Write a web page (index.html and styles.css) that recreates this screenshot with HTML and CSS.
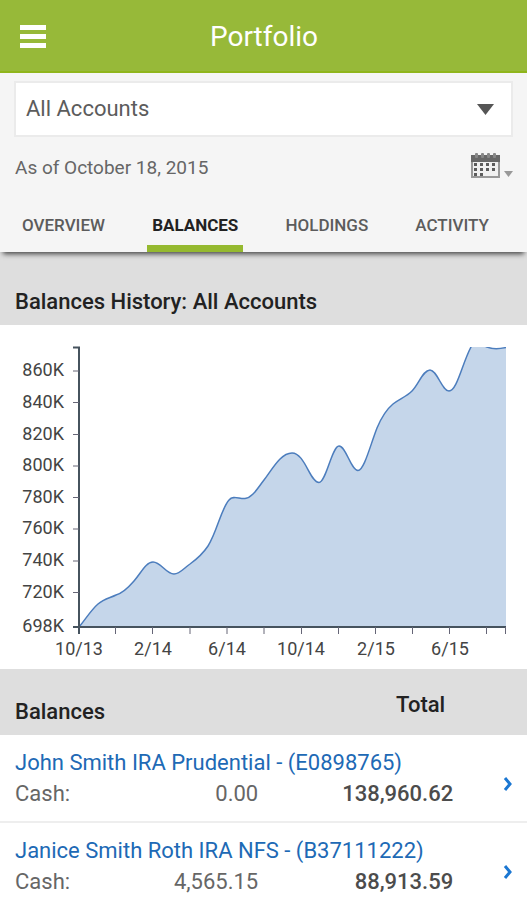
FILE: index.html
```html
<!DOCTYPE html>
<html lang="en">
<head>
<meta charset="utf-8">
<meta name="viewport" content="width=device-width, initial-scale=1">
<title>Portfolio</title>
<link rel="stylesheet" href="styles.css">
</head>
<body>
<header class="app-bar">
  <button class="menu-button" type="button" aria-label="Menu">
    <svg width="26" height="23" viewBox="0 0 26 23" fill="#fff" aria-hidden="true"><path d="M0 0h26v5H0zM0 9h26v5H0zM0 18h26v5H0z"/></svg>
  </button>
  <h1 class="app-title">Portfolio</h1>
</header>

<section class="filters">
  <div class="account-picker">
    <select class="account-select" aria-label="Account">
      <option>All Accounts</option>
    </select>
    <svg class="account-arrow" width="17" height="11" viewBox="0 0 17 11" fill="#555" aria-hidden="true"><path d="M0 0h17l-8.500 11z"/></svg>
  </div>
  <div class="date-row">
    <p class="as-of">As of October 18, 2015</p>
    <button class="date-button" type="button" aria-label="Choose date">
      <svg width="43" height="28" viewBox="0 0 43 28" aria-hidden="true">
        <path fill="#f1f1f1" stroke="#999" stroke-width="2" d="M2 4h27v20H2z"/>
        <path fill="#686868" d="M1 2h29v7H1z"/>
        <g fill="#888"><rect x="5" y="0" width="3" height="5" rx="1"/><rect x="11" y="0" width="3" height="5" rx="1"/><rect x="17" y="0" width="3" height="5" rx="1"/><rect x="23" y="0" width="3" height="5" rx="1"/></g>
        <path fill="#5c5c5c" d="M4 10h3v3H4zM10 10h3v3h-3zM16 10h3v3h-3zM22 10h3v3h-3zM4 15h3v3H4zM10 15h3v3h-3zM16 15h3v3h-3zM22 15h3v3h-3zM4 20h3v3H4zM10 20h3v3h-3z"/>
        <path fill="#999" d="M34 18h9l-4.500 6z"/>
      </svg>
    </button>
  </div>
  <nav class="tabs">
    <a class="tab" href="#overview">OVERVIEW</a>
    <a class="tab tab-active" href="#balances" aria-current="page">BALANCES</a>
    <a class="tab" href="#holdings">HOLDINGS</a>
    <a class="tab" href="#activity">ACTIVITY</a>
  </nav>
</section>

<main>
  <h2 class="section-title">Balances History: All Accounts</h2>
  <svg class="chart" viewBox="0 325 527 344" role="img" aria-label="Balance history, all accounts">
    <defs><clipPath id="plot"><path d="M79 347h427v281H79z"/></clipPath></defs>
    <g clip-path="url(#plot)">
      <path class="chart-area" d="M79 627C85 620 91 610 98 604C104 599 110 598 116 595C123 593 128 588 134 581C141 573 146 562 153 562C161 562 166 574 174 574C180 574 184 568 190 564C197 559 202 555 208 546C217 532 221 509 229 500C233 495 239 499 245 498.500C252 498 257 489 264 480C273 468 281 453 292 453C305 453 310 482.500 319 482.500C326 482.500 332 446 339 446C346 446 351 470.500 358 470.500C364 470.500 370 446 377 428C382 416 387 409 393 404C399 399 406 397 412 391C419 384 423 370 430 370C437 370 442 391 449 391C457 391 462 364 471 347C475 340 482 345 487 347C493 349.500 499 349 506 347.500V627.500H79Z"/>
      <path class="chart-line" d="M79 627C85 620 91 610 98 604C104 599 110 598 116 595C123 593 128 588 134 581C141 573 146 562 153 562C161 562 166 574 174 574C180 574 184 568 190 564C197 559 202 555 208 546C217 532 221 509 229 500C233 495 239 499 245 498.500C252 498 257 489 264 480C273 468 281 453 292 453C305 453 310 482.500 319 482.500C326 482.500 332 446 339 446C346 446 351 470.500 358 470.500C364 470.500 370 446 377 428C382 416 387 409 393 404C399 399 406 397 412 391C419 384 423 370 430 370C437 370 442 391 449 391C457 391 462 364 471 347C475 340 482 345 487 347C493 349.500 499 349 506 347.500"/>
    </g>
    <path class="chart-axis" d="M73 347.500h6V634M73 627h433"/>
    <path class="chart-ticks" d="M73 371h6M73 402.500h6M73 434.500h6M73 466h6M73 497.500h6M73 529h6M73 561h6M73 592.500h6M115.500 627v7M152.500 627v7M190 627v7M227 627v7M264 627v7M301.500 627v7M338.500 627v7M375.500 627v7M412.500 627v7M449.500 627v7M486.500 627v7M505.500 627v7"/>
    <g class="chart-label chart-label-y">
      <text x="64" y="376">860K</text>
      <text x="64" y="408">840K</text>
      <text x="64" y="440">820K</text>
      <text x="64" y="471">800K</text>
      <text x="64" y="503">780K</text>
      <text x="64" y="534">760K</text>
      <text x="64" y="566">740K</text>
      <text x="64" y="598">720K</text>
      <text x="64" y="632">698K</text>
    </g>
    <g class="chart-label chart-label-x">
      <text x="79" y="655">10/13</text>
      <text x="153" y="655">2/14</text>
      <text x="227" y="655">6/14</text>
      <text x="301" y="655">10/14</text>
      <text x="376" y="655">2/15</text>
      <text x="450" y="655">6/15</text>
    </g>
  </svg>

  <table class="balances">
    <colgroup><col class="col-label"><col class="col-cash"><col class="col-total"><col class="col-open"></colgroup>
    <thead>
      <tr>
        <th class="head-balances" colspan="2" scope="col">Balances</th>
        <th class="head-total" scope="col">Total</th>
        <td></td>
      </tr>
    </thead>
    <tbody class="account">
      <tr>
        <th class="account-name" colspan="3" scope="rowgroup"><a href="#E0898765">John Smith IRA Prudential - (E0898765)</a></th>
        <td class="open" rowspan="2"><a href="#E0898765" aria-label="Open John Smith IRA Prudential"><svg width="11" height="14" viewBox="0 0 11 14" aria-hidden="true"><path d="M3 1l5 6-5 6"/></svg></a></td>
      </tr>
      <tr class="amounts">
        <td class="label">Cash:</td>
        <td class="cash">0.00</td>
        <td class="total">138,960.62</td>
      </tr>
    </tbody>
    <tbody class="account">
      <tr>
        <th class="account-name" colspan="3" scope="rowgroup"><a href="#B37111222">Janice Smith Roth IRA NFS - (B37111222)</a></th>
        <td class="open" rowspan="2"><a href="#B37111222" aria-label="Open Janice Smith Roth IRA NFS"><svg width="11" height="14" viewBox="0 0 11 14" aria-hidden="true"><path d="M3 1l5 6-5 6"/></svg></a></td>
      </tr>
      <tr class="amounts">
        <td class="label">Cash:</td>
        <td class="cash">4,565.15</td>
        <td class="total">88,913.59</td>
      </tr>
    </tbody>
  </table>
</main>
</body>
</html>
```
FILE: styles.css
```css
* {
  box-sizing: border-box;
}

body {
  margin: 0;
  background: #fff;
  color: #666;
  font-family: Roboto, "Liberation Sans", sans-serif;
  font-size: 22px;
}

h1, h2, p {
  margin: 0;
}

a {
  color: inherit;
  text-decoration: none;
}

button {
  display: flex;
  padding: 0;
  border: 0;
  background: none;
}

.app-bar {
  display: grid;
  grid-template-columns: 1fr auto 1fr;
  align-items: center;
  height: 73px;
  padding: 2px 19px 0 20px;
  border-bottom: 2px solid #8fb51b;
  background: #97b939;
}

.app-title {
  color: #fff;
  font-size: 28px;
  font-weight: 400;
  line-height: 32px;
}

.filters {
  position: relative;
  padding: 8px 14px 0;
  background: #f5f5f5;
  box-shadow: 0 5px 5px -3px #444;
}

.account-picker {
  display: grid;
  align-items: center;
}

.account-select {
  grid-area: 1 / 1;
  width: 100%;
  height: 56px;
  padding: 0 10px 2px;
  border: 2px solid #ebebeb;
  border-radius: 0;
  appearance: none;
  background: #fff;
  color: #5c5c5c;
  font: inherit;
}

.account-arrow {
  grid-area: 1 / 1;
  justify-self: end;
  margin-right: 19px;
  pointer-events: none;
}

.date-row {
  display: flex;
  justify-content: space-between;
  align-items: center;
  height: 60px;
  padding-left: 1px;
}

.as-of {
  font-size: 19px;
}

.tabs {
  display: flex;
  justify-content: space-between;
  padding: 0 19px 0 3px;
}

.tab {
  height: 55px;
  padding: 16px 5px 0;
  border-bottom: 7px solid transparent;
  color: #5c5c5c;
  font-size: 17px;
  font-weight: 500;
  line-height: 24px;
}

.tab-active {
  border-color: #95b92f;
  color: #222;
  font-weight: 700;
}

.section-title {
  padding: 36px 15px 9px;
  background: #dedede;
  color: #222;
  font-size: 22px;
  font-weight: 500;
  line-height: 28px;
}

.chart {
  display: block;
  width: 100%;
}

.chart-area {
  fill: #c5d6ea;
}

.chart-line {
  fill: none;
  stroke: #4c7dbd;
  stroke-width: 1.500;
}

.chart-axis {
  fill: none;
  stroke: #46535e;
  stroke-width: 2;
}

.chart-ticks {
  stroke: #667;
  stroke-width: 1;
}

.chart-label {
  fill: #444;
  font-size: 18px;
}

.chart-label-y {
  text-anchor: end;
}

.chart-label-x {
  text-anchor: middle;
}

.balances {
  width: 100%;
  border-collapse: collapse;
  table-layout: fixed;
}

.balances th,
.balances td {
  padding: 0;
  line-height: 28px;
}

.col-label {
  width: 20%;
}

.col-cash {
  width: 29%;
}

.col-total {
  width: 37%;
}

.col-open {
  width: 14%;
}

.balances thead {
  height: 66px;
  background: #dedede;
  color: #222;
}

.balances .head-balances {
  padding: 10px 0 9px 15px;
  font-weight: 500;
  text-align: left;
  vertical-align: bottom;
}

.balances .head-total {
  padding: 0 8px 16px 0;
  font-weight: 500;
  text-align: right;
  vertical-align: bottom;
}

.account {
  border-bottom: 2px solid #eee;
}

.balances .account-name {
  padding: 14px 0 3px 15px;
  color: #2069b5;
  font-weight: 400;
  text-align: left;
}

.balances .amounts td {
  padding-bottom: 13px;
}

.balances .label {
  padding-left: 15px;
}

.balances .cash,
.balances .total {
  text-align: right;
}

.balances .total {
  color: #4c4c4c;
  font-weight: 500;
}

.balances .open {
  padding: 12px 14px 0 0;
  text-align: right;
}

.open svg {
  fill: none;
  stroke: #1b77d2;
  stroke-width: 3;
}
```
